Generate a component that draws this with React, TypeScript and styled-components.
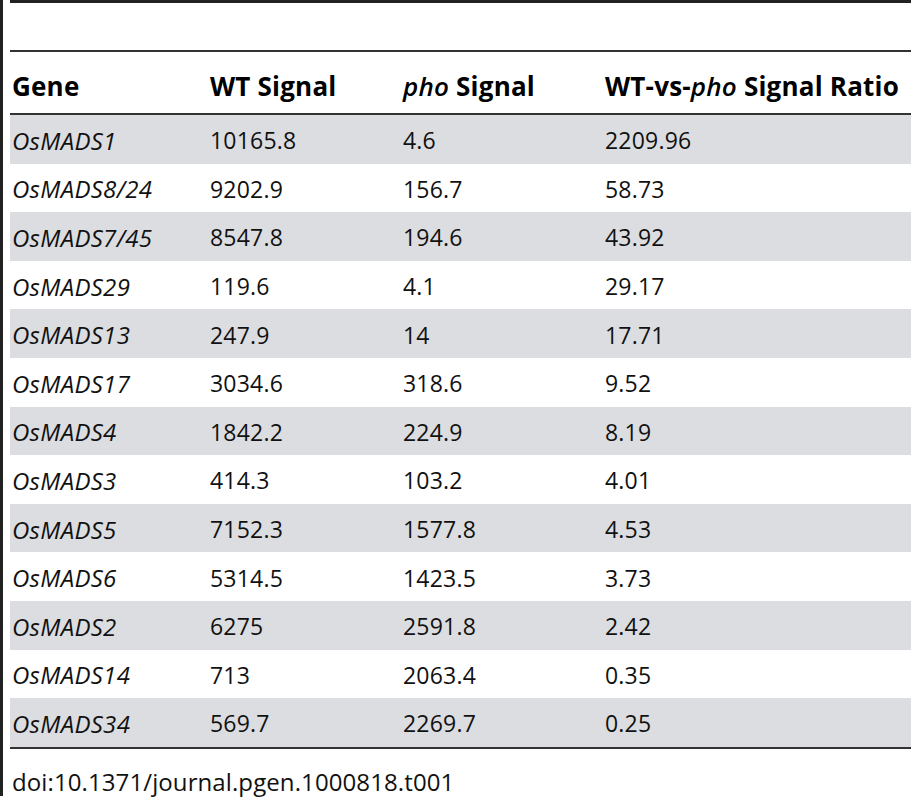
import React from "react";
import styled, { createGlobalStyle } from "styled-components";

const Global = createGlobalStyle`
  html, body { margin: 0; padding: 0; background: #ffffff; }
  body { font-family: "Open Sans", "Liberation Sans", sans-serif; color: #111; }
`;

const Page = styled.div`
  display: flex;
  align-items: flex-start;
  width: 911px;
  height: 800px;
  overflow: hidden;
`;

const SideRule = styled.div`
  width: 3px;
  height: 796px;
  background: #222;
  flex: none;
`;

const Content = styled.div`
  flex: 1;
  margin-left: 7px;
  display: flex;
  flex-direction: column;
`;

const TopRule = styled.div`
  height: 3px;
  background: #222;
  margin-bottom: 47px;
`;

const Table = styled.div`
  display: grid;
  grid-template-columns: 198px 193px 202px 1fr;
  border-top: 2px solid #333;
  border-bottom: 2px solid #333;
`;

const HeadCell = styled.div`
  height: 63px;
  display: flex;
  align-items: center;
  padding: 6px 0 0 2px;
  box-sizing: border-box;
  font-weight: 700;
  font-size: 26px;
  letter-spacing: 0.2px;
  color: #000;
  border-bottom: 2px solid #333;
  white-space: nowrap;
`;

const Em = styled.span`
  font-style: italic;
  font-weight: 600;
`;

const Cell = styled.div<{ $shade: boolean; $italic?: boolean }>`
  height: 48.6px;
  display: flex;
  align-items: center;
  padding: 2px 0 0 2px;
  box-sizing: border-box;
  font-size: ${(p) => (p.$italic ? "24px" : "23px")};
  letter-spacing: ${(p) => (p.$italic ? "0.3px" : "0.2px")};
  font-style: ${(p) => (p.$italic ? "italic" : "normal")};
  background: ${(p) => (p.$shade ? "#dcdde0" : "#ffffff")};
  color: #111;
  white-space: nowrap;
`;

const Caption = styled.div`
  padding: 16px 0 0 2px;
  font-size: 24px;
  letter-spacing: 0.1px;
  color: #111;
`;

const rows: [string, string, string, string][] = [
  ["OsMADS1", "10165.8", "4.6", "2209.96"],
  ["OsMADS8/24", "9202.9", "156.7", "58.73"],
  ["OsMADS7/45", "8547.8", "194.6", "43.92"],
  ["OsMADS29", "119.6", "4.1", "29.17"],
  ["OsMADS13", "247.9", "14", "17.71"],
  ["OsMADS17", "3034.6", "318.6", "9.52"],
  ["OsMADS4", "1842.2", "224.9", "8.19"],
  ["OsMADS3", "414.3", "103.2", "4.01"],
  ["OsMADS5", "7152.3", "1577.8", "4.53"],
  ["OsMADS6", "5314.5", "1423.5", "3.73"],
  ["OsMADS2", "6275", "2591.8", "2.42"],
  ["OsMADS14", "713", "2063.4", "0.35"],
  ["OsMADS34", "569.7", "2269.7", "0.25"],
];

export default function App() {
  return (
    <>
      <Global />
      <Page>
        <SideRule />
        <Content>
          <TopRule />
          <Table>
            <HeadCell>Gene</HeadCell>
            <HeadCell>WT Signal</HeadCell>
            <HeadCell>
              <Em>pho</Em>&nbsp;Signal
            </HeadCell>
            <HeadCell>
              WT-vs-<Em>pho</Em>&nbsp;Signal Ratio
            </HeadCell>
            {rows.map((r, i) => (
              <React.Fragment key={r[0]}>
                <Cell $shade={i % 2 === 0} $italic>
                  {r[0]}
                </Cell>
                <Cell $shade={i % 2 === 0}>{r[1]}</Cell>
                <Cell $shade={i % 2 === 0}>{r[2]}</Cell>
                <Cell $shade={i % 2 === 0}>{r[3]}</Cell>
              </React.Fragment>
            ))}
          </Table>
          <Caption>doi:10.1371/journal.pgen.1000818.t001</Caption>
        </Content>
      </Page>
    </>
  );
}
